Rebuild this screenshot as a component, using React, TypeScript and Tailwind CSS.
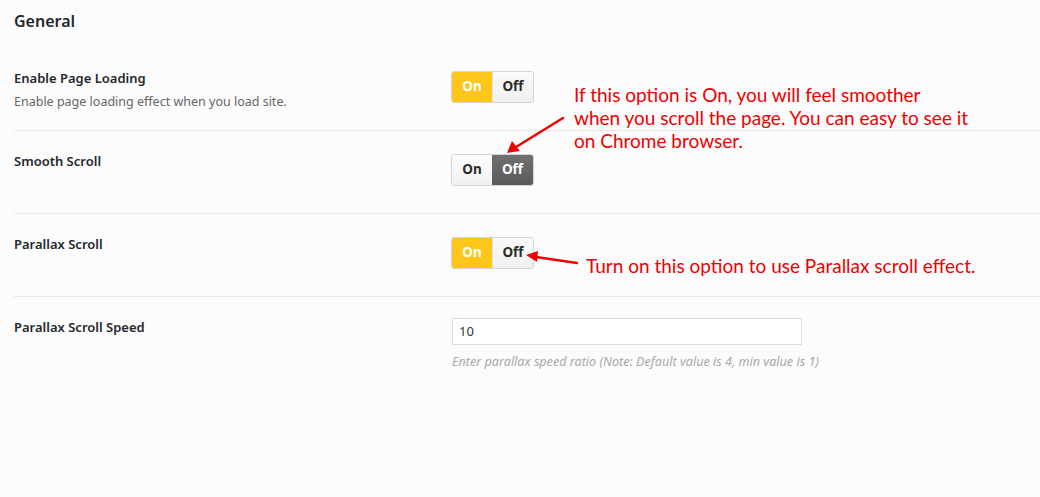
import React from "react";

const font = { fontFamily: '"Noto Sans", "Open Sans", sans-serif' };

function Toggle({ on }: { on: boolean }) {
  return (
    <div className="flex h-[32px] w-[83px] rounded-[3px] border border-[#d4d4d4] overflow-hidden text-[13.5px] font-bold leading-none">
      <div
        className={
          on
            ? "w-[40px] flex items-center justify-center bg-[#fec51b] text-white"
            : "w-[40px] flex items-center justify-center bg-gradient-to-b from-[#fdfdfd] to-[#f0f0f0] text-[#2b2b2b]"
        }
      >
        On
      </div>
      <div
        className={
          on
            ? "flex-1 flex items-center justify-center bg-gradient-to-b from-[#fafafa] to-[#f0f0f0] text-[#2b2b2b] border-l border-[#e2e2e2]"
            : "flex-1 flex items-center justify-center bg-gradient-to-b from-[#707070] to-[#5a5a5a] text-white"
        }
      >
        Off
      </div>
    </div>
  );
}

function Row({
  label,
  desc,
  children,
  border = true,
  ctlPad = "pt-[23px]",
}: {
  label: string;
  desc?: string;
  children: React.ReactNode;
  border?: boolean;
  ctlPad?: string;
}) {
  return (
    <div className={border ? "flex h-[83px] border-b border-[#e8e8e8]" : "flex h-[100px]"}>
      <div className="w-[437px] pt-[21px]">
        <div className="text-[13px] font-semibold leading-[18px] text-[#23282d]">{label}</div>
        {desc && <div className="mt-[6px] text-[12.5px] leading-[18px] text-[#666]">{desc}</div>}
      </div>
      <div className={ctlPad}>{children}</div>
    </div>
  );
}

export default function App() {
  return (
    <div className="relative w-[1040px] h-[497px] bg-[#fcfcfc] overflow-hidden" style={font}>
      <div className="pl-[14px] pt-[11px]">
        <h2 className="text-[16px] font-semibold leading-[20px] text-[#23282d] h-[37px]">General</h2>
        <Row label="Enable Page Loading" desc="Enable page loading effect when you load site.">
          <Toggle on={true} />
        </Row>
        <Row label="Smooth Scroll">
          <Toggle on={false} />
        </Row>
        <Row label="Parallax Scroll">
          <Toggle on={true} />
        </Row>
        <Row label="Parallax Scroll Speed" border={false} ctlPad="pt-[21px] pl-[1px]">
          <div className="w-[350px] h-[27px] border border-[#dcdcdc] bg-white px-[6px] flex items-center text-[13px] text-[#333]">
            10
          </div>
          <div className="mt-[8px] text-[12.6px] italic text-[#a8a8a8] leading-[18px]">
            Enter parallax speed ratio (Note: Default value is 4, min value is 1)
          </div>
        </Row>
      </div>

      <div
        className="absolute left-[574px] top-[83px] text-[19px] leading-[23px] text-[#f00000]"
        style={{ fontFamily: 'Lato, "Open Sans", sans-serif' }}
      >
        If this option is On, you will feel smoother
        <br />
        when you scroll the page. You can easy to see it
        <br />
        on Chrome browser.
      </div>
      <div
        className="absolute left-[586px] top-[254px] text-[19px] leading-[23px] text-[#f00000]"
        style={{ fontFamily: 'Lato, "Open Sans", sans-serif' }}
      >
        Turn on this option to use Parallax scroll effect.
      </div>

      <svg className="absolute left-0 top-0 pointer-events-none" width="1040" height="497">
        <line x1="563" y1="118" x2="516" y2="147" stroke="#f00000" strokeWidth="2.5" strokeLinecap="round" />
        <polygon points="507,153 512,141 520,151" fill="#f00000" />
        <line x1="577" y1="263" x2="536" y2="257" stroke="#f00000" strokeWidth="2.5" strokeLinecap="round" />
        <polygon points="526,255 538,251 537,262" fill="#f00000" />
      </svg>
    </div>
  );
}
